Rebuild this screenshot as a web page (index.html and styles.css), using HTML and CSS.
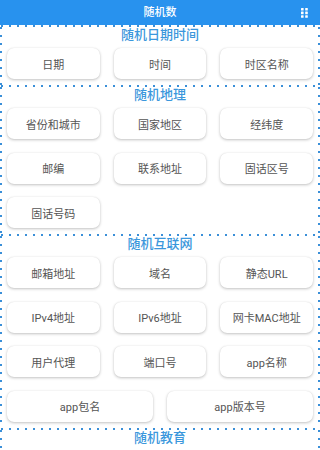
FILE: index.html
```html
<!DOCTYPE html>
<html lang="zh-CN">
<head>
<meta charset="utf-8">
<title>随机数</title>
<link rel="stylesheet" href="styles.css">
</head>
<body>
<header class="appbar">
  <span class="appbar-spacer"></span>
  <h1 class="appbar-title">随机数</h1>
  <span class="appbar-action">
    <svg class="grid-icon" width="7" height="10" viewBox="0 0 7 10" aria-hidden="true">
      <rect x="0" y="0" width="2.6" height="2.6" rx="0.5"/>
      <rect x="4.2" y="0" width="2.6" height="2.6" rx="0.5"/>
      <rect x="0" y="3.6" width="2.6" height="2.6" rx="0.5"/>
      <rect x="4.2" y="3.6" width="2.6" height="2.6" rx="0.5"/>
      <rect x="0" y="7.2" width="2.6" height="2.6" rx="0.5"/>
      <rect x="4.2" y="7.2" width="2.6" height="2.6" rx="0.5"/>
    </svg>
  </span>
</header>
<main class="content">
  <section class="group">
    <h2 class="group-title">随机日期时间</h2>
    <div class="grid3">
      <div class="btn">日期</div>
      <div class="btn">时间</div>
      <div class="btn">时区名称</div>
    </div>
  </section>
  <section class="group">
    <h2 class="group-title">随机地理</h2>
    <div class="grid3">
      <div class="btn">省份和城市</div>
      <div class="btn">国家地区</div>
      <div class="btn">经纬度</div>
      <div class="btn">邮编</div>
      <div class="btn">联系地址</div>
      <div class="btn">固话区号</div>
      <div class="btn">固话号码</div>
    </div>
  </section>
  <section class="group">
    <h2 class="group-title">随机互联网</h2>
    <div class="grid3">
      <div class="btn">邮箱地址</div>
      <div class="btn">域名</div>
      <div class="btn">静态URL</div>
      <div class="btn">IPv4地址</div>
      <div class="btn">IPv6地址</div>
      <div class="btn">网卡MAC地址</div>
      <div class="btn">用户代理</div>
      <div class="btn">端口号</div>
      <div class="btn">app名称</div>
    </div>
    <div class="grid2">
      <div class="btn">app包名</div>
      <div class="btn">app版本号</div>
    </div>
  </section>
  <section class="group">
    <h2 class="group-title">随机教育</h2>
  </section>
</main>
</body>
</html>
```
FILE: styles.css
```css
html, body {
  margin: 0;
  padding: 0;
  background: #ffffff;
  height: 450px;
  overflow: hidden;
}
body {
  font-family: Roboto, "Noto Sans CJK SC", "Noto Sans", sans-serif;
}
.appbar {
  height: 25px;
  background: #2892ee;
  display: grid;
  grid-template-columns: 1fr auto 1fr;
  align-items: center;
}
.appbar-title {
  margin: 0;
  font-size: 11px;
  font-weight: 500;
  color: #ffffff;
  line-height: 25px;
}
.appbar-action {
  justify-self: end;
  padding-right: 12px;
  display: flex;
  align-items: center;
}
.grid-icon {
  display: block;
  fill: #ffffff;
}
.group {
  padding: 2px 7px 6px 7px;
  background-image:
    linear-gradient(to right, #3a8fd8 2px, transparent 2px),
    linear-gradient(to bottom, #3a8fd8 2px, transparent 2px),
    linear-gradient(to bottom, #3a8fd8 2px, transparent 2px);
  background-size: 8px 2px, 2px 8px, 2px 8px;
  background-repeat: repeat-x, repeat-y, repeat-y;
  background-position: 1px 0, 0 2px, 100% 2px;
}
.group-title {
  margin: 0 0 5px 0;
  font-size: 13px;
  font-weight: 500;
  line-height: 16px;
  color: #3b97dc;
  text-align: center;
}
.grid3 {
  display: grid;
  grid-template-columns: repeat(3, 1fr);
  column-gap: 14px;
  row-gap: 13.5px;
}
.grid2 {
  display: grid;
  grid-template-columns: repeat(2, 1fr);
  column-gap: 14px;
  margin-top: 13.5px;
}
.btn {
  height: 31px;
  display: flex;
  align-items: center;
  justify-content: center;
  background: #ffffff;
  border-radius: 7px;
  box-shadow: 0 1px 3px rgba(0, 0, 0, 0.24), 0 0 1px rgba(0, 0, 0, 0.1);
  font-size: 11px;
  color: #555555;
  white-space: nowrap;
}
```
